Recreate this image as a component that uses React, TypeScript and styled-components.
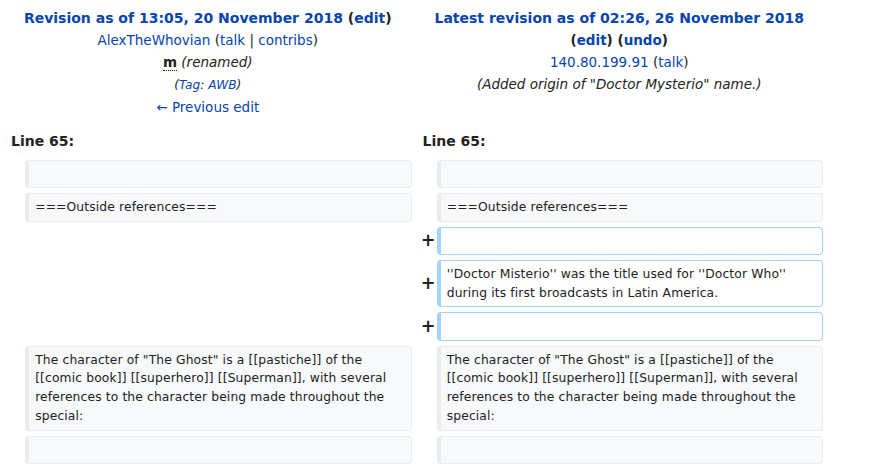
import * as React from "react";
import styled, { createGlobalStyle, css } from "styled-components";

const Global = createGlobalStyle`
  html, body {
    margin: 0;
    padding: 0;
    background: #fff;
  }
  body {
    font-family: "DejaVu Sans", sans-serif;
    font-size: 14px;
    color: #222;
  }
`;

const Diff = styled.div`
  display: grid;
  grid-template-columns: 17px 386.5px 17px 386.5px;
  column-gap: 4px;
  row-gap: 5px;
  padding: 0 4px;
  width: max-content;
`;

const HeadCell = styled.div`
  grid-column: span 2;
  text-align: center;
  line-height: 22px;
  padding-top: 7px;
  font-size: 13.5px;
`;

const HeadLine = styled.div<{ $title?: boolean }>`
  white-space: nowrap;
  ${p => p.$title && css`
    font-size: 14px;
  `}
`;

const Link = styled.a`
  color: #0645ad;
  text-decoration: none;
  cursor: pointer;
`;

const Title = styled.strong`
  font-weight: bold;
`;

const Minor = styled.abbr`
  font-weight: bold;
  text-decoration: none;
  border-bottom: 1px dotted #222;
  cursor: help;
`;

const Comment = styled.span`
  font-style: italic;
  color: #222;
`;

const Tags = styled.span`
  font-style: italic;
  font-size: 90%;
`;

const LineNo = styled.div`
  grid-column: span 2;
  font-weight: bold;
  line-height: 22px;
  padding: 7px 7px 3px;
`;

const Marker = styled.div`
  align-self: center;
  justify-self: end;
  margin-right: -3px;
  font-weight: bold;
  font-size: 17.5px;
  line-height: 1.2;
`;

const Empty = styled.div<{ $span?: number }>`
  grid-column: span ${p => p.$span || 1};
`;

const Line = styled.div<{ $kind: "context" | "added" }>`
  font-size: 12.32px;
  letter-spacing: 0.13px;
  line-height: 18.8px;
  min-height: 18.8px;
  padding: 3.8px 6.2px;
  border-style: solid;
  border-width: 1px 1px 1px 4px;
  border-radius: 4px;
  word-wrap: break-word;
  color: #222;
  ${p => p.$kind === "context" ? css`
    background: #f8f9fa;
    border-color: #eaecf0;
  ` : css`
    background: #fff;
    border-color: #a3d3ff;
  `}
`;

const ghost = `The character of "The Ghost" is a [[pastiche]] of the [[comic book]] [[superhero]] [[Superman]], with several references to the character being made throughout the special:`;

const Context = ({ text }: { text: string }) => (
  <>
    <Empty />
    <Line $kind="context">{text}</Line>
    <Empty />
    <Line $kind="context">{text}</Line>
  </>
);

const Added = ({ text }: { text: string }) => (
  <>
    <Empty $span={2} />
    <Marker>+</Marker>
    <Line $kind="added">{text}</Line>
  </>
);

export default function App() {
  return (
    <>
      <Global />
      <Diff>
        <HeadCell>
          <HeadLine $title>
            <Title><Link>Revision as of 13:05, 20 November 2018</Link> (<Link>edit</Link>)</Title>
          </HeadLine>
          <HeadLine>
            <Link>AlexTheWhovian</Link> (<Link>talk</Link> | <Link>contribs</Link>)
          </HeadLine>
          <HeadLine>
            <Minor title="This is a minor edit">m</Minor> <Comment>(renamed)</Comment>
          </HeadLine>
          <HeadLine>
            <Tags>(<Link>Tag</Link>: <Link>AWB</Link>)</Tags>
          </HeadLine>
          <HeadLine>
            <Link>← Previous edit</Link>
          </HeadLine>
        </HeadCell>
        <HeadCell>
          <HeadLine $title>
            <Title><Link>Latest revision as of 02:26, 26 November 2018</Link></Title>
          </HeadLine>
          <HeadLine>
            <Title>(<Link>edit</Link>) (<Link>undo</Link>)</Title>
          </HeadLine>
          <HeadLine>
            <Link>140.80.199.91</Link> (<Link>talk</Link>)
          </HeadLine>
          <HeadLine>
            <Comment>(Added origin of "Doctor Mysterio" name.)</Comment>
          </HeadLine>
        </HeadCell>

        <LineNo>Line 65:</LineNo>
        <LineNo>Line 65:</LineNo>

        <Context text="" />
        <Context text="===Outside references===" />
        <Added text="" />
        <Added text={`''Doctor Misterio'' was the title used for ''Doctor Who'' during its first broadcasts in Latin America.`} />
        <Added text="" />
        <Context text={ghost} />
        <Context text="" />
      </Diff>
    </>
  );
}
